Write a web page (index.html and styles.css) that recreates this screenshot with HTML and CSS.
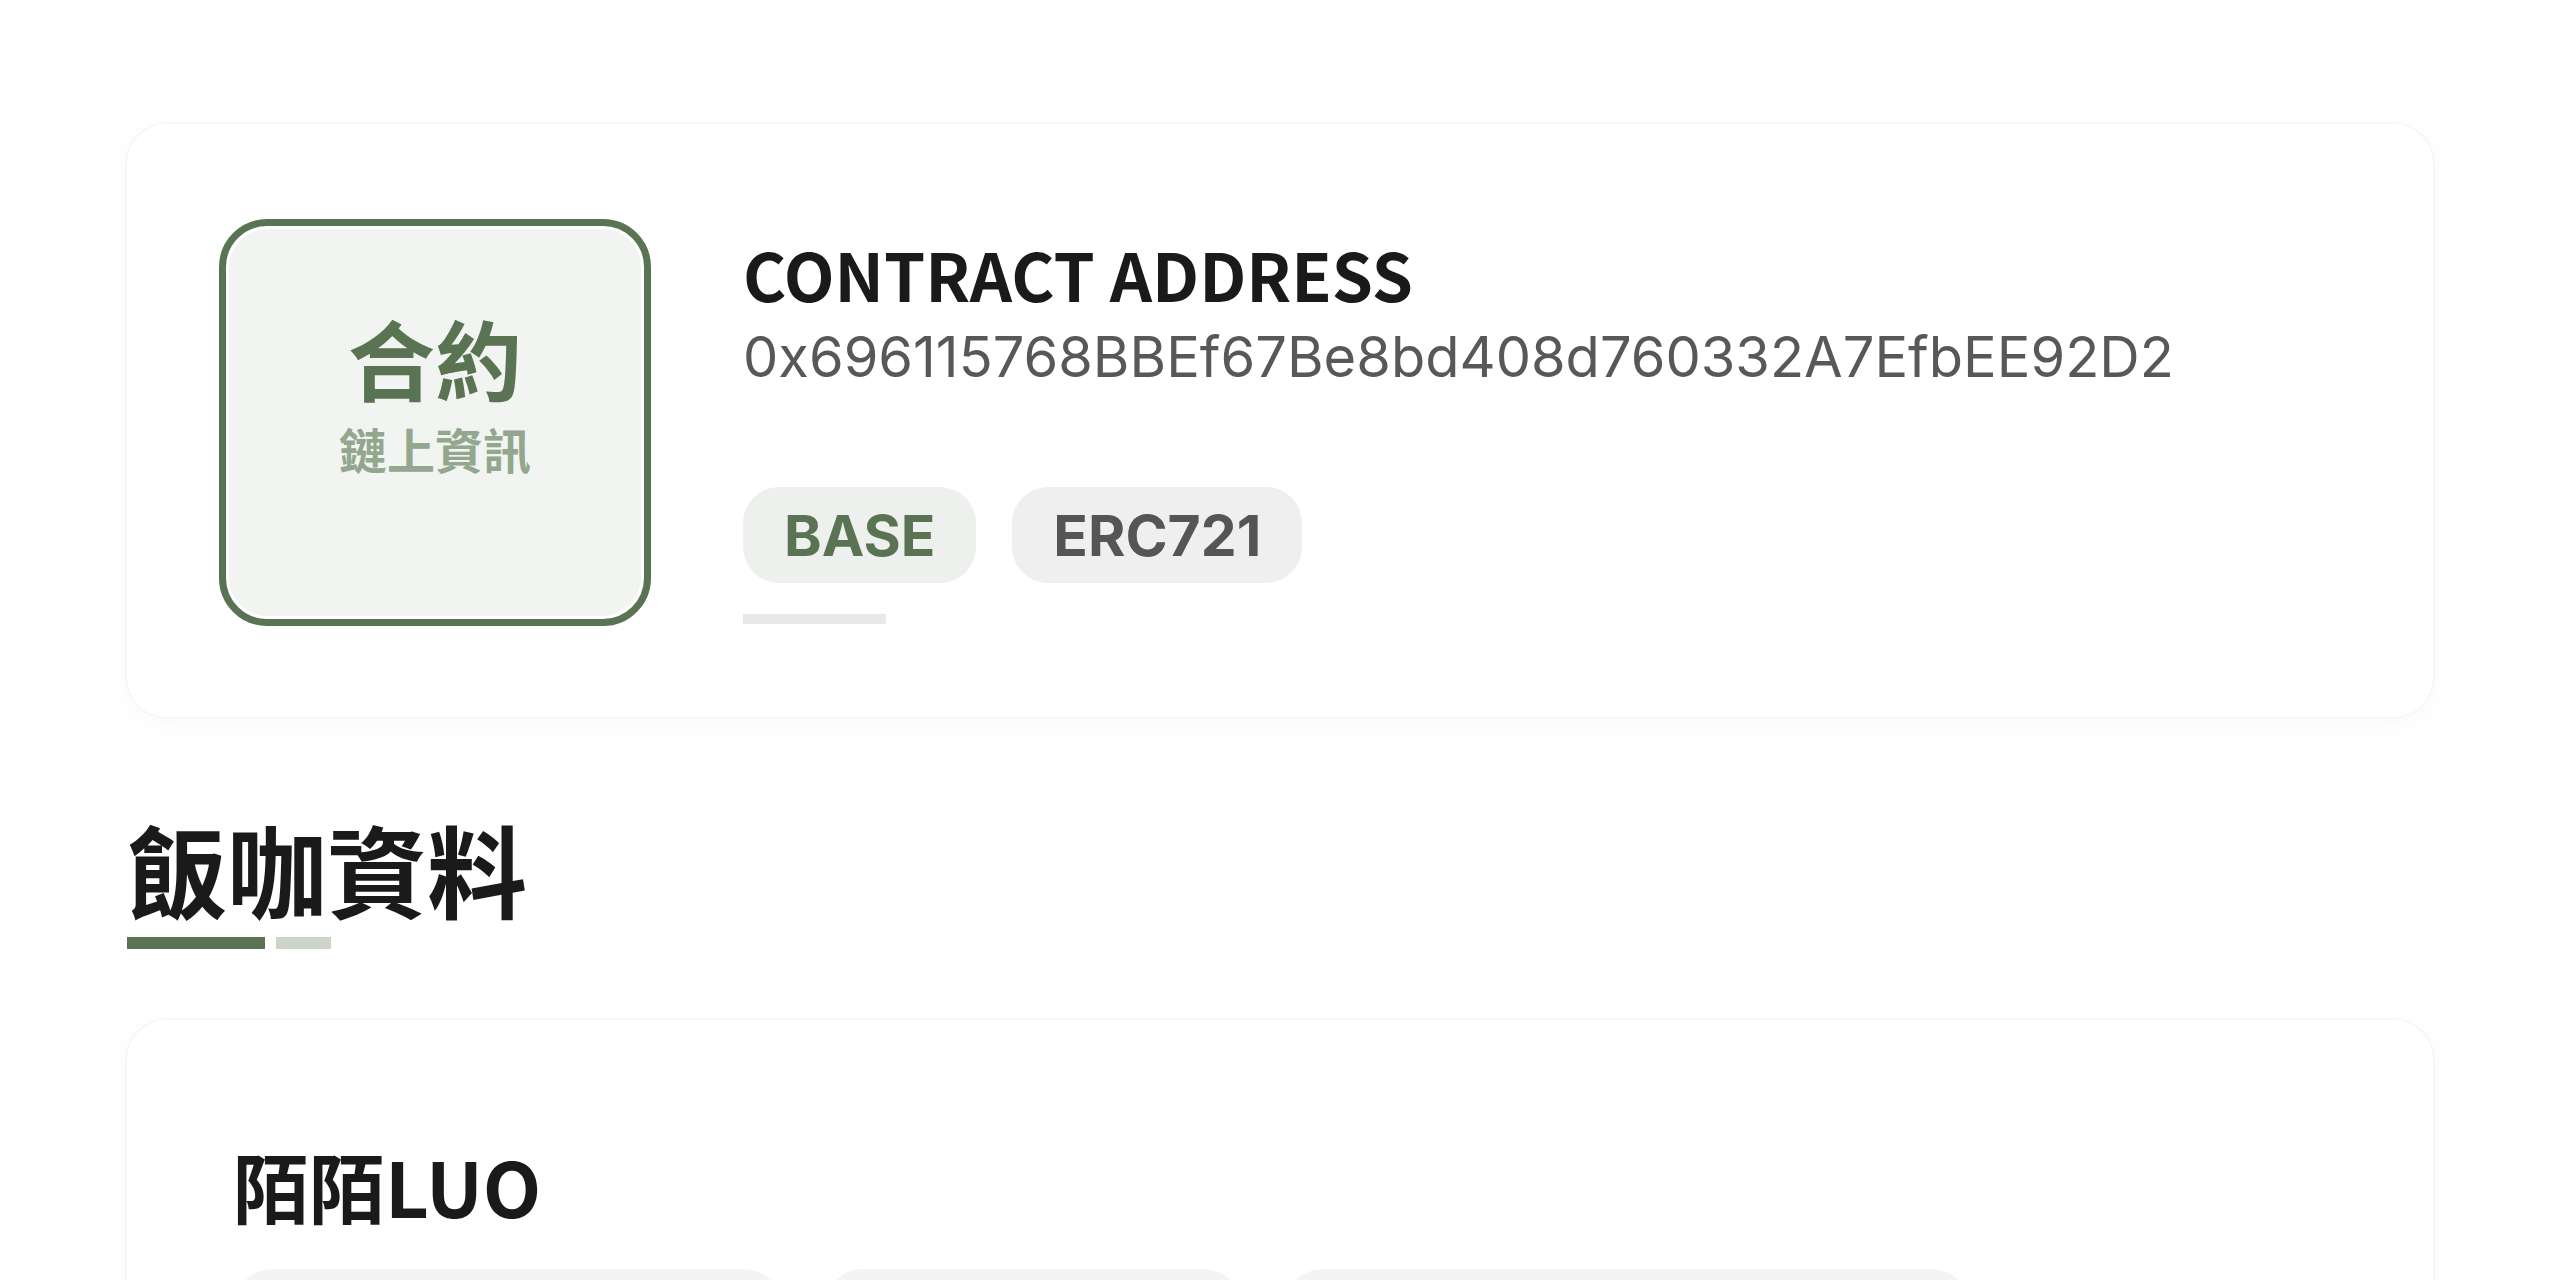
FILE: index.html
```html
<!DOCTYPE html>
<html lang="zh-Hant">
<head>
<meta charset="utf-8">
<title>合約資訊</title>
<link rel="stylesheet" href="styles.css">
</head>
<body>
<main class="page">
  <section class="contract-card">
    <div class="badge-box">
      <div class="badge-main">合約</div>
      <div class="badge-sub">鏈上資訊</div>
    </div>
    <div class="contract-info">
      <h2 class="contract-label">CONTRACT ADDRESS</h2>
      <p class="contract-address">0x696115768BBEf67Be8bd408d760332A7EfbEE92D2</p>
      <div class="tags">
        <span class="tag tag-chain">BASE</span>
        <span class="tag tag-std">ERC721</span>
      </div>
      <div class="skeleton-bar"></div>
    </div>
  </section>

  <section class="section-head">
    <h1 class="section-title">飯咖資料</h1>
    <div class="accent">
      <span class="accent-main"></span>
      <span class="accent-sub"></span>
    </div>
  </section>

  <section class="profile-card">
    <h3 class="profile-name">陌陌LUO</h3>
    <div class="chips">
      <div class="chip chip-wide"></div>
      <div class="chip chip-mid"></div>
      <div class="chip chip-long"></div>
    </div>
  </section>
</main>
</body>
</html>
```

FILE: styles.css
```css
* { box-sizing: border-box; }

html, body {
  margin: 0;
  padding: 0;
  background: #ffffff;
}

body {
  font-family: "Noto Sans CJK TC", "Noto Sans", sans-serif;
  color: #1a1a1a;
  overflow: hidden;
  height: 1280px;
}

.page {
  width: 2306px;
  margin-left: 127px;
  padding-top: 124px;
}

/* ---------- contract card ---------- */
.contract-card {
  display: flex;
  align-items: flex-start;
  gap: 92px;
  background: #ffffff;
  border-radius: 40px;
  padding: 95px 92px 91px 92px;
  box-shadow: 0 0 0 2px #f7f7f7, 0 6px 24px rgba(0, 0, 0, 0.03);
}

.badge-box {
  flex: none;
  width: 432px;
  height: 407px;
  border: 7px solid #5a7352;
  border-radius: 48px;
  background: #f1f4f0;
  box-shadow: inset 0 0 0 3px #ffffff;
  display: flex;
  flex-direction: column;
  align-items: center;
  justify-content: center;
  padding-bottom: 63px;
}

.badge-main {
  font-size: 87px;
  line-height: 1.2;
  font-weight: 700;
  color: #5a7352;
}

.badge-sub {
  margin-top: 11px;
  font-size: 48px;
  line-height: 1.2;
  font-weight: 700;
  color: #93a68e;
}

.contract-info {
  padding-top: 12px;
  display: flex;
  flex-direction: column;
  align-items: flex-start;
}

.contract-label {
  margin: 0;
  font-family: "Noto Sans CJK TC", "Noto Sans", sans-serif;
  font-size: 66px;
  line-height: 84px;
  font-weight: 700;
  color: #1a1a1a;
}

.contract-address {
  margin: 6px 0 0;
  font-family: Inter, "Liberation Sans", sans-serif;
  font-size: 56px;
  line-height: 73px;
  font-weight: 400;
  color: #585858;
}

.tags {
  margin-top: 93px;
  display: flex;
  gap: 36px;
}

.tag {
  display: inline-flex;
  align-items: center;
  height: 96px;
  padding: 0 41px;
  border-radius: 36px;
  font-family: Inter, "Liberation Sans", sans-serif;
  font-size: 57px;
  line-height: 1;
  font-weight: 700;
}

.tag-chain {
  background: #edf0ec;
  color: #5a7352;
}

.tag-std {
  background: #efefef;
  color: #555555;
}

.skeleton-bar {
  margin-top: 31px;
  width: 143px;
  height: 10px;
  background: #e8e8e8;
}

/* ---------- section head ---------- */
.section-head {
  margin-top: 90px;
}

.section-title {
  margin: 0;
  font-size: 100px;
  line-height: 122px;
  font-weight: 700;
  color: #1a1a1a;
}

.accent {
  margin-top: 8px;
  display: flex;
  gap: 11px;
}

.accent-main {
  width: 138px;
  height: 12px;
  background: #5a7352;
}

.accent-sub {
  width: 55px;
  height: 12px;
  background: #cdd5cb;
}

/* ---------- profile card ---------- */
.profile-card {
  margin-top: 71px;
  min-height: 500px;
  background: #ffffff;
  border-radius: 40px;
  padding: 120px 92px 92px 106px;
  box-shadow: 0 0 0 2px #f7f7f7, 0 6px 24px rgba(0, 0, 0, 0.03);
}

.profile-name {
  margin: 0;
  font-size: 76px;
  line-height: 91px;
  font-weight: 700;
  color: #1a1a1a;
}

.chips {
  margin-top: 38px;
  display: flex;
  gap: 40px;
}

.chip {
  height: 120px;
  border-radius: 40px;
  background: #f4f4f6;
}

.chip-wide { width: 550px; }
.chip-mid { width: 420px; }
.chip-long { width: 688px; }
```
